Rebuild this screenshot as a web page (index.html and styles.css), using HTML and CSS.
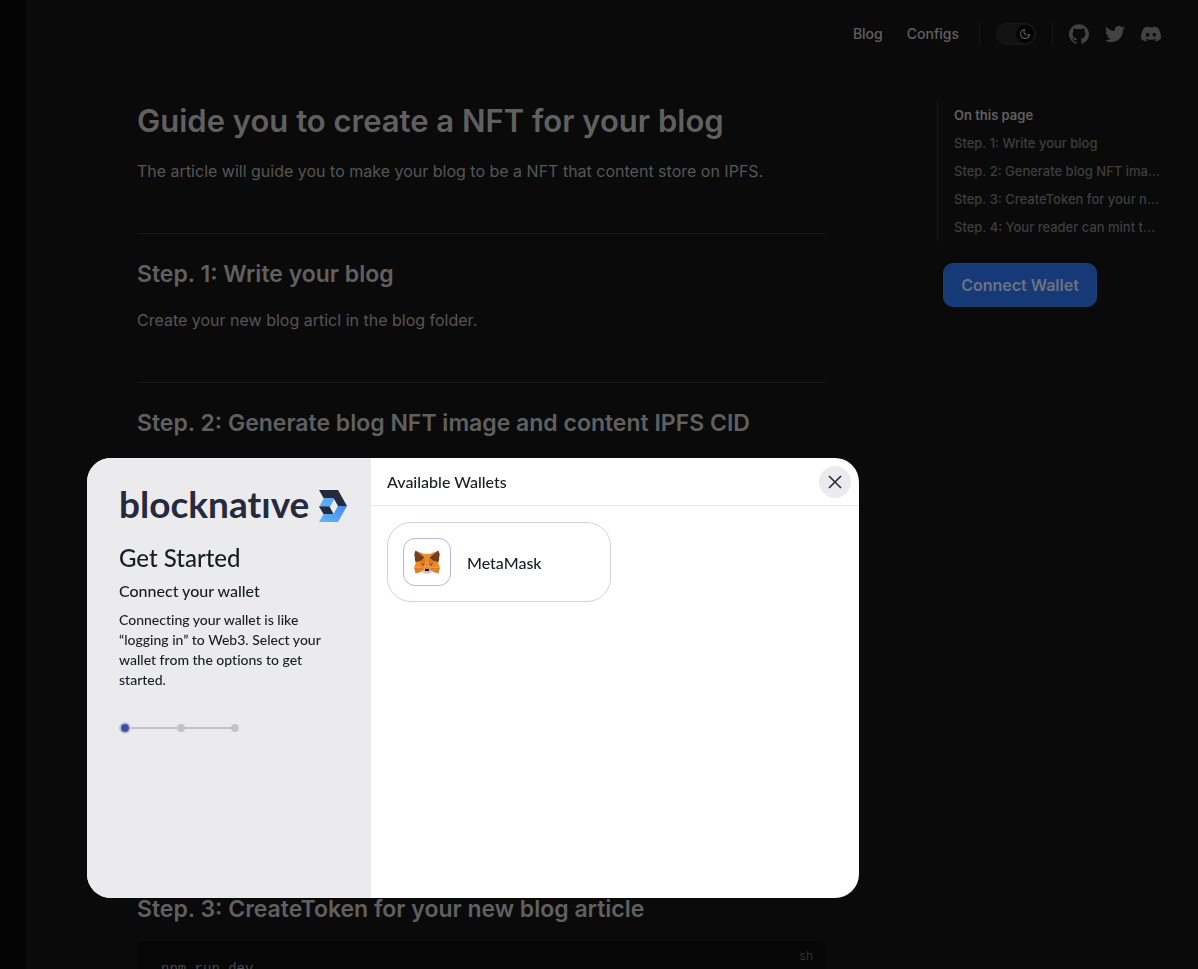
FILE: index.html
```html
<!DOCTYPE html>
<html lang="en">
<head>
<meta charset="utf-8">
<meta name="viewport" content="width=device-width, initial-scale=1">
<title>Guide you to create a NFT for your blog</title>
<link rel="stylesheet" href="styles.css">
</head>
<body>
<div class="page">
  <div class="gutter"></div>
  <div class="main">
    <header class="nav">
      <nav class="nav-links">
        <a href="#blog">Blog</a>
        <a href="#configs">Configs</a>
      </nav>
      <div class="nav-group">
        <button class="switch" type="button" role="switch" aria-checked="true" aria-label="Toggle dark mode">
          <span class="knob"><svg viewBox="0 0 24 24" width="12" height="12"><path fill="currentColor" d="M12.1 22c-.3 0-.6 0-.9 0-5.5-.5-9.5-5.4-9-10.900.4-4.800 4.200-8.600 9-9 .4 0 .8.2 1 .5.200.300.200.800-.1 1.100-2 2.700-1.400 6.400 1.300 8.400 2.100 1.600 5 1.600 7.100 0 .300-.200.700-.300 1.100-.1.300.200.500.600.500 1-.200 2.700-1.500 5.100-3.600 6.800-1.900 1.400-4.100 2.200-6.400 2.200zM9.300 4.400c-2.900 1-5 3.600-5.200 6.800-.4 4.400 2.800 8.300 7.200 8.700 2.100.2 4.200-.4 5.800-1.800 1.100-.9 1.900-2.100 2.400-3.400-2.500.9-5.300.5-7.500-1.100-2.800-2.200-3.900-5.900-2.700-9.200z"/></svg></span>
        </button>
      </div>
      <div class="socials">
        <a href="#github" aria-label="GitHub"><svg viewBox="0 0 24 24"><path d="M12 .297c-6.63 0-12 5.373-12 12 0 5.303 3.438 9.8 8.205 11.385.6.113.82-.258.82-.577 0-.285-.01-1.04-.015-2.04-3.338.724-4.042-1.61-4.042-1.61C4.422 18.07 3.633 17.7 3.633 17.7c-1.087-.744.084-.729.084-.729 1.205.084 1.838 1.236 1.838 1.236 1.07 1.835 2.809 1.305 3.495.998.108-.776.417-1.305.76-1.605-2.665-.3-5.466-1.332-5.466-5.93 0-1.31.465-2.38 1.235-3.22-.135-.303-.54-1.523.105-3.176 0 0 1.005-.322 3.3 1.23.96-.267 1.98-.399 3-.405 1.02.006 2.04.138 3 .405 2.28-1.552 3.285-1.23 3.285-1.23.645 1.653.24 2.873.12 3.176.765.84 1.23 1.91 1.23 3.22 0 4.61-2.805 5.625-5.475 5.92.42.36.81 1.096.81 2.22 0 1.606-.015 2.896-.015 3.286 0 .315.21.69.825.57C20.565 22.092 24 17.592 24 12.297c0-6.627-5.373-12-12-12"/></svg></a>
        <a href="#twitter" aria-label="Twitter"><svg viewBox="0 0 24 24"><path d="M23.953 4.57a10 10 0 01-2.825.775 4.958 4.958 0 002.163-2.723c-.951.555-2.005.959-3.127 1.184a4.92 4.92 0 00-8.384 4.482C7.69 8.095 4.067 6.13 1.64 3.162a4.822 4.822 0 00-.666 2.475c0 1.71.87 3.213 2.188 4.096a4.904 4.904 0 01-2.228-.616v.06a4.923 4.923 0 003.946 4.827 4.996 4.996 0 01-2.212.085 4.936 4.936 0 004.604 3.417 9.867 9.867 0 01-6.102 2.105c-.39 0-.779-.023-1.17-.067a13.995 13.995 0 007.557 2.209c9.053 0 13.998-7.496 13.998-13.985 0-.21 0-.42-.015-.63A9.935 9.935 0 0024 4.59z"/></svg></a>
        <a href="#discord" aria-label="Discord"><svg viewBox="0 0 24 24"><path d="M20.317 4.37a19.791 19.791 0 0 0-4.885-1.515.074.074 0 0 0-.079.037c-.21.375-.444.864-.608 1.25a18.27 18.27 0 0 0-5.487 0 12.64 12.64 0 0 0-.617-1.25.077.077 0 0 0-.079-.037A19.736 19.736 0 0 0 3.677 4.37a.07.07 0 0 0-.032.027C.533 9.046-.32 13.58.099 18.057a.082.082 0 0 0 .031.057 19.9 19.9 0 0 0 5.993 3.03.078.078 0 0 0 .084-.028 14.09 14.09 0 0 0 1.226-1.994.076.076 0 0 0-.041-.106 13.107 13.107 0 0 1-1.872-.892.077.077 0 0 1-.008-.128c.126-.094.252-.192.372-.291a.074.074 0 0 1 .077-.01c3.928 1.793 8.18 1.793 12.062 0a.074.074 0 0 1 .078.009c.12.099.246.198.373.292a.077.077 0 0 1-.006.127 12.299 12.299 0 0 1-1.873.893.077.077 0 0 0-.041.107c.36.698.772 1.362 1.225 1.993a.076.076 0 0 0 .084.028 19.839 19.839 0 0 0 6.002-3.03.077.077 0 0 0 .032-.054c.5-5.177-.838-9.674-3.549-13.66a.061.061 0 0 0-.031-.03zM8.02 15.33c-1.183 0-2.157-1.085-2.157-2.419 0-1.333.956-2.419 2.157-2.419 1.21 0 2.176 1.096 2.157 2.42 0 1.333-.956 2.418-2.157 2.418zm7.975 0c-1.183 0-2.157-1.085-2.157-2.419 0-1.333.955-2.419 2.157-2.419 1.21 0 2.176 1.096 2.157 2.42 0 1.333-.946 2.418-2.157 2.418Z"/></svg></a>
      </div>
    </header>
    <div class="content">
      <article class="doc">
        <h1>Guide you to create a NFT for your blog</h1>
        <p>The article will guide you to make your blog to be a NFT that content store on IPFS.</p>
        <section>
          <h2>Step. 1: Write your blog</h2>
          <p>Create your new blog articl in the blog folder.</p>
        </section>
        <section class="long">
          <h2>Step. 2: Generate blog NFT image and content IPFS CID</h2>
        </section>
        <section>
          <h2>Step. 3: CreateToken for your new blog article</h2>
          <div class="code"><span class="lang">sh</span><pre><code>npm run dev</code></pre></div>
        </section>
      </article>
      <aside class="aside">
        <nav class="outline" aria-labelledby="outline-title">
          <div class="outline-title" id="outline-title">On this page</div>
          <a href="#step-1">Step. 1: Write your blog</a>
          <a href="#step-2">Step. 2: Generate blog NFT image and content IPFS CID</a>
          <a href="#step-3">Step. 3: CreateToken for your new blog article</a>
          <a href="#step-4">Step. 4: Your reader can mint the NFT of your blog</a>
        </nav>
        <button class="connect" type="button">Connect Wallet</button>
      </aside>
    </div>
  </div>
</div>

<div class="overlay">
  <div class="modal" role="dialog" aria-modal="true" aria-labelledby="modal-title">
    <div class="intro">
      <div class="logo">
        <span class="wordmark">blocknatıve</span>
        <svg viewBox="0 0 28 32" width="28" height="32" aria-hidden="true">
          <defs><linearGradient id="blue" x1="0" y1="1" x2="1" y2="0"><stop offset="0" stop-color="#5cb8fa"/><stop offset="1" stop-color="#4a86ec"/></linearGradient></defs>
          <path fill="#5aa9f5" d="M5 8h11l-5.500 9.500H0z"/>
          <path fill="url(#blue)" d="M19 16h9L19 32H0l4.500-8h10z"/>
          <path fill="#262a3e" d="M0 0h19l9 16h-9l-4.500-8H4.500z"/>
          <path fill="#262a3e" d="M0 16.500h10.500l4 7.500H4.500z"/>
        </svg>
      </div>
      <h2 class="intro-title">Get Started</h2>
      <h3 class="intro-sub">Connect your wallet</h3>
      <p class="intro-text">Connecting your wallet is like “logging in” to Web3. Select your wallet from the options to get started.</p>
      <div class="steps"><span class="dot active"></span><span class="bar"></span><span class="dot"></span><span class="bar"></span><span class="dot"></span></div>
    </div>
    <div class="wallets">
      <div class="wallets-head">
        <h2 id="modal-title">Available Wallets</h2>
        <button class="close" type="button" aria-label="Close"><svg viewBox="0 0 14 14" width="14" height="14"><path d="M1 1l12 12M13 1L1 13" stroke="#262a3e" stroke-width="1.600" fill="none"/></svg></button>
      </div>
      <div class="wallets-body">
        <button class="wallet" type="button">
          <span class="wallet-icon">
            <svg viewBox="0 0 212 189" width="26" height="24" aria-hidden="true">
              <path fill="#ee8a28" d="M75 27l14 31 6 92h22l7-92 12-31z"/>
              <g id="half">
                <path fill="#cdbdb2" d="M60.700 173.200l27.600 7.300V171l2.300-2.300h15.700v19.200H89.400l-20.800-9z"/>
                <path fill="#ee8a28" d="M16.300 96.200L.6 141.700l39.300-2.200h25.400v-19.700l-1.200-40.500-5.600 4.500z"/>
                <path fill="#d06c20" d="M46.100 101.200l46.200 1.200-5.100 23.600-22-5.600z"/>
                <path fill="#e58030" d="M46.100 101.800l19.200 18v18z"/>
                <path fill="#ee8a28" d="M65.200 120.400l22.500 5.600 7.400 24.200-5.100 2.800-24.800-14.600z"/>
                <path fill="#e27d25" d="M65.200 138.400l-4.500 34.800 29.900-20.800z"/>
                <path fill="#e27d25" d="M92.200 102.400l2.900 47.800-8.500-24.500z"/>
                <path fill="#d06c20" d="M39.400 138.900l25.800-.5-4.500 34.800z"/>
                <path fill="#e27d25" d="M12.900 188.400l47.800-15.200-21.300-34.300L.6 141.700z"/>
                <path fill="#e2761b" d="M88.900 58.500L64.700 78.700l-18.600 22.500 46.200 1.700z"/>
                <path fill="#d7c1b3" d="M60.700 173.200l29.900-20.800-2.300 18v10.100L68 176.600z"/>
                <path fill="#233447" d="M70.300 112.500l-6.200 12.900 22-5.600z"/>
                <path fill="#e2761b" d="M12.400.6l76.500 57.900L75.900 27z"/>
                <path fill="#763d16" d="M12.400.6L2.200 31.500l5.700 33.700-4 2.300 5.600 5-4.500 4 6.200 5.600-3.900 3.400 9 11.300 42.200-13q30.900-24.800 30.400-25.300T12.400.6z"/>
              </g>
              <use href="#half" transform="matrix(-1 0 0 1 212 0)"/>
              <path fill="#161616" d="M90.500 152.400L88.300 171l2.800-2.300h29.300l3.300 2.300-2.200-18.600-4.500-2.800-22.500.6z"/>
            </svg>
          </span>
          <span>MetaMask</span>
        </button>
      </div>
    </div>
  </div>
</div>
</body>
</html>
```
FILE: styles.css
```css
* { box-sizing: border-box; }
html, body { margin: 0; height: 100%; }
body { background: #0a0a0a; color: #606060; font-family: Inter, "Liberation Sans", sans-serif; font-size: 16px; overflow: hidden; }
a { color: inherit; text-decoration: none; }
button { font: inherit; color: inherit; cursor: pointer; padding: 0; }
h1, h2, h3, p, pre { margin: 0; }

.page { display: flex; height: 100vh; overflow: hidden; }
.gutter { flex: none; width: 26px; background: #040404; }
.main { flex: 1; min-width: 0; }

.nav { display: flex; justify-content: flex-end; align-items: center; height: 68px; padding-right: 29px; }
.nav-links { display: flex; gap: 24px; padding-right: 20px; font-size: 14px; font-weight: 500; line-height: 24px; }
.nav-group { display: flex; align-items: center; height: 24px; padding: 0 16px; border: solid #161616; border-width: 0 1px; }
.switch { display: flex; justify-content: flex-end; width: 40px; height: 22px; padding: 1px; border: 1px solid #191919; border-radius: 11px; background: #121212; }
.knob { display: grid; place-items: center; width: 18px; height: 18px; border-radius: 50%; background: #030303; color: #606060; }
.socials { display: flex; padding-left: 8px; }
.socials a { display: grid; place-items: center; width: 36px; height: 36px; color: #424242; }
.socials svg { width: 20px; height: 20px; fill: currentColor; }

.content { display: flex; gap: 112px; padding: 33px 37px 0 111px; }
.doc { flex: 1; min-width: 0; }
.doc h1 { font-size: 31px; line-height: 40px; font-weight: 600; margin-bottom: 16px; }
.doc h2 { margin: 48px 0 16px; padding-top: 24px; border-top: 1px solid #161616; font-size: 23px; line-height: 32px; font-weight: 600; }
.doc p { line-height: 28px; color: #565656; }
.long { min-height: 438px; }
.code { position: relative; padding: 16px 24px; border-radius: 8px; background: #060606; color: #454850; }
.code pre { font: 14px/24px "Liberation Mono", monospace; }
.code code { font: inherit; }
.lang { position: absolute; top: 6px; right: 12px; font-size: 12px; line-height: 18px; color: #333; }

.aside { flex: none; width: 224px; }
.outline { padding-left: 16px; border-left: 1px solid #161616; font-size: 13px; line-height: 28px; font-weight: 500; color: #3e3e3e; }
.outline-title { font-weight: 600; color: #606060; }
.outline a { display: block; overflow: hidden; white-space: nowrap; text-overflow: ellipsis; }
.connect { width: 154px; height: 44px; margin: 22px 0 0 6px; border: 1px solid #1b4170; border-radius: 10px; background: #163a78; color: #6c7280; font-weight: 600; }

.overlay { position: fixed; inset: 0; display: flex; align-items: flex-end; padding: 0 87px 71px; }
.modal { display: flex; width: 100%; max-width: 772px; min-height: 440px; overflow: hidden; border-radius: 24px; background: #fff; color: #1a1d26; font-family: Lato, "Open Sans", sans-serif; font-variant-ligatures: none; }
.intro { flex: none; width: 284px; padding: 32px; background: #ebebed; }
.logo { display: flex; align-items: center; justify-content: space-between; width: 228px; height: 32px; margin-bottom: 22px; }
.wordmark { color: #262a3e; font-size: 37px; line-height: 28px; font-weight: 700; padding-bottom: 4px; }
.intro-title { margin-bottom: 8px; font-size: 24px; line-height: 28px; font-weight: 500; }
.intro-sub { margin-bottom: 8px; font-size: 16px; line-height: 22px; font-weight: 500; }
.intro-text { font-size: 14px; line-height: 20px; font-weight: 500; }
.steps { display: flex; align-items: center; width: 120px; margin-top: 32px; height: 12px; }
.dot { flex: none; width: 8px; height: 8px; border-radius: 50%; background: #c2c4c9; }
.dot.active { width: 12px; height: 12px; border: 2px solid #c0c4e4; background: #454e9c; }
.bar { flex: 1; height: 2px; background: #c2c4c9; }

.wallets { flex: 1; min-width: 0; }
.wallets-head { display: flex; align-items: center; justify-content: space-between; height: 48px; padding: 0 8px 0 16px; border-bottom: 1px solid #e6e6e9; }
.wallets-head h2 { font-size: 16px; line-height: 20px; font-weight: 500; }
.close { display: grid; place-items: center; width: 32px; height: 32px; border: 0; border-radius: 50%; background: #ebebed; }
.wallets-body { padding: 16px; }
.wallet { display: flex; align-items: center; gap: 16px; width: 224px; height: 80px; padding: 0 15px; border: 1px solid #d0d1e4; border-radius: 24px; background: #fff; font-weight: 500; }
.wallet-icon { display: grid; place-items: center; width: 48px; height: 48px; border: 1px solid #b4b8dc; border-radius: 12px; }
```
